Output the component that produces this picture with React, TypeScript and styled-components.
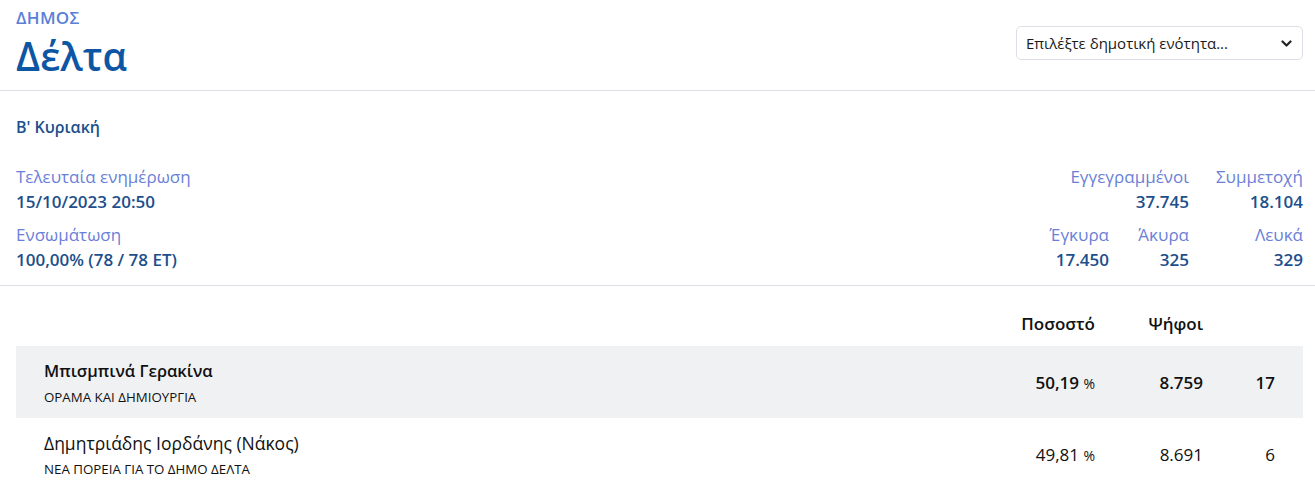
import React from 'react'
import styled, { createGlobalStyle } from 'styled-components'

const GlobalStyle = createGlobalStyle`
  html, body {
    margin: 0;
    padding: 0;
    background: #fff;
    font-family: 'Open Sans', 'Noto Sans', sans-serif;
  }
`

const Page = styled.div`
  padding: 0 12px 0 16px;
`

const Header = styled.header`
  display: flex;
  justify-content: space-between;
  align-items: flex-start;
  margin: 0 -12px 0 -16px;
  padding: 7px 12px 7px 16px;
  border-bottom: 1px solid #dcdde4;
`

const Kicker = styled.div`
  color: #5b7fd6;
  font-size: 17px;
  font-weight: 600;
  letter-spacing: 0.3px;
  line-height: 22px;
`

const Title = styled.h1`
  margin: 0;
  color: #0c56a4;
  font-size: 39px;
  font-weight: 600;
  line-height: 54px;
`

const SelectBox = styled.div`
  margin-top: 19px;
  width: 287px;
  height: 34px;
  box-sizing: border-box;
  border: 1px solid #dcdfe5;
  border-radius: 5px;
  display: flex;
  align-items: center;
  justify-content: space-between;
  padding: 0 10px 0 9px;
  font-size: 15px;
  color: #1a1a1a;
`

const Info = styled.section`
  margin: 0 -12px 0 -16px;
  padding: 24px 12px 13px 16px;
  border-bottom: 1px solid #dcdde4;
`

const Round = styled.div`
  color: #1c4f8c;
  font-size: 16px;
  font-weight: 600;
  line-height: 24px;
  margin-bottom: 25px;
`

const InfoGrid = styled.div`
  display: flex;
  justify-content: space-between;
`

const Col = styled.div`
  display: flex;
  flex-direction: column;
  gap: 8px;
`

const StatRow = styled.div`
  display: flex;
  justify-content: flex-end;
`

const Stat = styled.div<{ $w: number }>`
  width: ${p => p.$w}px;
  text-align: right;
`

const Label = styled.div`
  color: #6a7fd8;
  font-size: 17px;
  line-height: 25px;
`

const Value = styled.div`
  color: #1c4f8c;
  font-size: 17px;
  font-weight: 600;
  line-height: 25px;
`

const Table = styled.div`
  padding-top: 19px;
`

const Row = styled.div<{ $lead?: boolean }>`
  display: grid;
  grid-template-columns: 1fr 120px 108px 72px 28px;
  align-items: center;
  background: ${p => (p.$lead ? '#f0f1f3' : 'transparent')};
  padding: 0 0 0 28px;
  font-weight: ${p => (p.$lead ? 600 : 400)};
  color: #111;
`

const HeadRow = styled(Row)`
  height: 36px;
  font-weight: 600;
  margin-bottom: 5px;
`

const BodyRow = styled(Row)`
  height: 72px;
`

const Cell = styled.div`
  text-align: right;
  font-size: 17px;
`

const Name = styled.div<{ $lead?: boolean }>`
  font-size: ${p => (p.$lead ? 16.5 : 17.5)}px;
  line-height: 24px;
`

const Party = styled.div`
  font-size: 13.3px;
  font-weight: 400;
  line-height: 18px;
  margin-top: 5px;
`

const Pct = styled.span`
  font-size: 14px;
  font-weight: 400;
`

const Chevron = () => (
  <svg width="11" height="7" viewBox="0 0 11 7">
    <path d="M1.5 1.5l4 4 4-4" fill="none" stroke="#222" strokeWidth="2.2" strokeLinecap="round" strokeLinejoin="round" />
  </svg>
)

const candidates = [
  { name: 'Μπισμπινά Γερακίνα', party: 'ΟΡΑΜΑ ΚΑΙ ΔΗΜΙΟΥΡΓΙΑ', pct: '50,19', votes: '8.759', seats: '17', lead: true },
  { name: 'Δημητριάδης Ιορδάνης (Νάκος)', party: 'ΝΕΑ ΠΟΡΕΙΑ ΓΙΑ ΤΟ ΔΗΜΟ ΔΕΛΤΑ', pct: '49,81', votes: '8.691', seats: '6', lead: false },
]

export default function App() {
  return (
    <Page>
      <GlobalStyle />
      <Header>
        <div>
          <Kicker>ΔΗΜΟΣ</Kicker>
          <Title>Δέλτα</Title>
        </div>
        <SelectBox>
          <span>Επιλέξτε δημοτική ενότητα...</span>
          <Chevron />
        </SelectBox>
      </Header>
      <Info>
        <Round>Β' Κυριακή</Round>
        <InfoGrid>
          <Col>
            <div>
              <Label>Τελευταία ενημέρωση</Label>
              <Value>15/10/2023 20:50</Value>
            </div>
            <div>
              <Label>Ενσωμάτωση</Label>
              <Value>100,00% (78 / 78 ΕΤ)</Value>
            </div>
          </Col>
          <Col>
            <StatRow>
              <Stat $w={160}>
                <Label>Εγγεγραμμένοι</Label>
                <Value>37.745</Value>
              </Stat>
              <Stat $w={114}>
                <Label>Συμμετοχή</Label>
                <Value>18.104</Value>
              </Stat>
            </StatRow>
            <StatRow>
              <Stat $w={80}>
                <Label>Έγκυρα</Label>
                <Value>17.450</Value>
              </Stat>
              <Stat $w={80}>
                <Label>Άκυρα</Label>
                <Value>325</Value>
              </Stat>
              <Stat $w={114}>
                <Label>Λευκά</Label>
                <Value>329</Value>
              </Stat>
            </StatRow>
          </Col>
        </InfoGrid>
      </Info>
      <Table>
        <HeadRow>
          <div />
          <Cell>Ποσοστό</Cell>
          <Cell>Ψήφοι</Cell>
          <Cell />
          <div />
        </HeadRow>
        {candidates.map(c => (
          <BodyRow key={c.name} $lead={c.lead}>
            <div>
              <Name $lead={c.lead}>{c.name}</Name>
              <Party>{c.party}</Party>
            </div>
            <Cell>
              {c.pct} <Pct>%</Pct>
            </Cell>
            <Cell>{c.votes}</Cell>
            <Cell>{c.seats}</Cell>
            <div />
          </BodyRow>
        ))}
      </Table>
    </Page>
  )
}
